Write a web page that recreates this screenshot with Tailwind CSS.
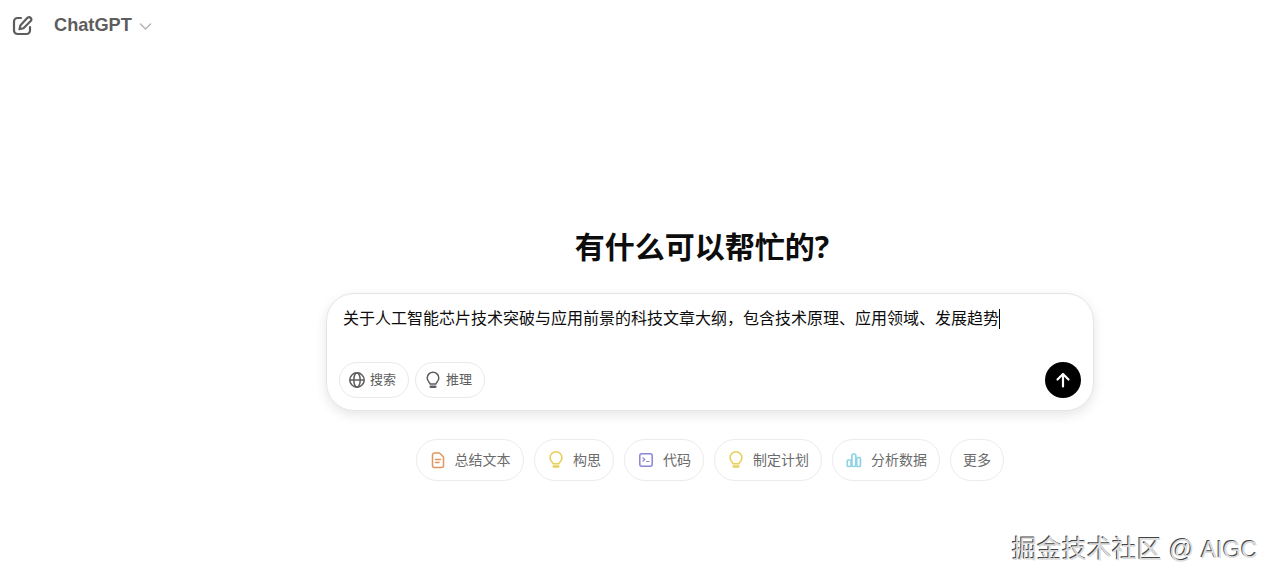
<!DOCTYPE html>
<html lang="zh">
<head>
  <meta charset="UTF-8" />
  <title>ChatGPT</title>
  <script src="https://cdn.jsdelivr.net/npm/@tailwindcss/browser@4"></script>
</head>
<body class="bg-white h-[580px] w-[1273px] overflow-hidden relative font-['Liberation_Sans','Noto_Sans_CJK_SC',sans-serif]">
  <!-- top bar -->
  <header class="flex items-center h-[50px] pl-[12px]">
    <svg class="w-[21px] h-[21px] text-[#5d5d5d]" viewBox="0 0 21 21" fill="none" stroke="currentColor" stroke-width="2.200" stroke-linecap="round" stroke-linejoin="round">
      <path d="M9 3H5.500A3.500 3.500 0 0 0 2 6.500v9A3.500 3.500 0 0 0 5.500 19h9a3.500 3.500 0 0 0 3.500-3.500V12"/>
      <path d="M15.700 2.600a2.300 2.300 0 0 1 3.200 3.200l-7.400 7.400-4 1 1-4z"/>
    </svg>
    <span class="ml-[21px] mt-[1px] text-[18.200px] font-bold text-[#5d5d5d]">ChatGPT</span>
    <svg class="ml-[7px] mt-[2px] w-[13px] h-[13px] text-[#b4b4b4]" viewBox="0 0 13 13" fill="none" stroke="currentColor" stroke-width="1.500" stroke-linecap="round" stroke-linejoin="round"><path d="M1.500 4l5 5 5-5"/></svg>
  </header>

  <main class="flex flex-col items-center ml-[326px] w-[768px]">
    <h1 class="mt-[177px] h-[40px] pr-[16px] leading-[40px] text-[30px] font-bold text-[#0d0d0d]">有什么可以帮忙的<span class="font-['Noto_Sans',sans-serif]">?</span></h1>

    <!-- composer -->
    <div class="mt-[26px] w-full h-[118px] rounded-[28px] border border-[#e5e5e5] bg-white shadow-[0_4px_12px_rgba(0,0,0,0.1)] flex flex-col justify-between pl-[12px] pr-[12px] pb-[12px]">
      <div class="flex items-center pl-[4px] pt-[13px] text-[16px] leading-[24px] text-[#0d0d0d] whitespace-nowrap">关于人工智能芯片技术突破与应用前景的科技文章大纲&#xFF0C;包含技术原理、应用领域、发展趋势<span class="inline-block w-px h-[20px] bg-black"></span></div>
      <div class="flex items-center justify-between">
        <div class="flex gap-[6px]">
          <button class="h-[36px] w-[70px] pr-[4px] rounded-full border border-[#e8e8e8] flex items-center justify-center gap-[4px] text-[13px] text-[#5d5d5d]">
            <svg class="w-[18px] h-[18px]" viewBox="0 0 18 18" fill="none" stroke="currentColor" stroke-width="1.500"><circle cx="9" cy="9" r="7.200"/><ellipse cx="9" cy="9" rx="3.200" ry="7.200"/><path d="M1.800 9h14.400"/></svg>
            搜索
          </button>
          <button class="h-[36px] w-[70px] pr-[4px] rounded-full border border-[#e8e8e8] flex items-center justify-center gap-[4px] text-[13px] text-[#5d5d5d]">
            <svg class="w-[18px] h-[18px]" viewBox="0 0 18 18" fill="none" stroke="currentColor" stroke-width="1.500" stroke-linecap="round"><path d="M6.200 13c0-1.300-3-2.600-3-6a5.800 5.800 0 0 1 11.600 0c0 3.400-3 4.700-3 6z"/><path d="M6.800 15.800h4.400" stroke-width="2.600"/></svg>
            推理
          </button>
        </div>
        <button class="w-[36px] h-[36px] rounded-full bg-black flex items-center justify-center">
          <svg class="w-[16px] h-[16px]" viewBox="0 0 16 16" fill="none" stroke="white" stroke-width="2.200" stroke-linecap="round" stroke-linejoin="round"><path d="M8 14.500V2M2.500 7.500L8 2l5.500 5.500"/></svg>
        </button>
      </div>
    </div>

    <!-- suggestions -->
    <div class="mt-[28px] flex gap-[10px] text-[14px] text-[#6b6b6b]">
      <button class="h-[42px] w-[108px] rounded-full border border-[#ececec] flex items-center justify-center gap-[9px]">
        <svg class="w-[16px] h-[18px] text-[#e2955f]" viewBox="0 0 16 18" fill="none" stroke="currentColor" stroke-width="1.500" stroke-linejoin="round" stroke-linecap="round"><path d="M2.500 4a2 2 0 0 1 2-2h5l4 4v8.500a2 2 0 0 1-2 2h-7a2 2 0 0 1-2-2z"/><path d="M5.500 8.500h5M5.500 11.500h3.500"/></svg>
        总结文本
      </button>
      <button class="h-[42px] w-[80px] rounded-full border border-[#ececec] flex items-center justify-center gap-[9px] pl-[1px]">
        <svg class="w-[16px] h-[18px] text-[#e9cf5a]" viewBox="0 0 16 18" fill="none" stroke="currentColor" stroke-width="1.600" stroke-linecap="round"><path d="M5.200 12.800c0-1.300-3.200-2.600-3.200-6a6 6 0 0 1 12 0c0 3.400-3.200 4.700-3.200 6z"/><path d="M5.800 15.500h4.400" stroke-width="2.600"/></svg>
        构思
      </button>
      <button class="h-[42px] w-[80px] rounded-full border border-[#ececec] flex items-center justify-center gap-[9px] pl-[1px]">
        <svg class="w-[16px] h-[16px] text-[#8a85d8]" viewBox="0 0 16 16" fill="none" stroke="currentColor" stroke-width="1.500" stroke-linecap="round" stroke-linejoin="round"><rect x="1.800" y="1.800" width="12.400" height="12.400" rx="2"/><path d="M5 6l1.800 1.500L5 9M8.500 9.500h2.500" stroke-width="1.200"/></svg>
        代码
      </button>
      <button class="h-[42px] w-[108px] rounded-full border border-[#ececec] flex items-center justify-center gap-[9px] pl-[1px]">
        <svg class="w-[16px] h-[18px] text-[#e9cf5a]" viewBox="0 0 16 18" fill="none" stroke="currentColor" stroke-width="1.600" stroke-linecap="round"><path d="M5.200 12.800c0-1.300-3.200-2.600-3.200-6a6 6 0 0 1 12 0c0 3.400-3.200 4.700-3.200 6z"/><path d="M5.800 15.500h4.400" stroke-width="2.600"/></svg>
        制定计划
      </button>
      <button class="h-[42px] w-[108px] rounded-full border border-[#ececec] flex items-center justify-center gap-[9px] pl-[1px]">
        <svg class="w-[16px] h-[16px] text-[#8fd3e3]" viewBox="0 0 16 16" fill="none" stroke="currentColor" stroke-width="1.700" stroke-linejoin="round"><rect x="1.300" y="8" width="3.700" height="6.500" rx="1"/><rect x="5.900" y="2" width="3.900" height="12.500" rx="1.500"/><rect x="10.700" y="5.500" width="3.700" height="9" rx="1"/></svg>
        分析数据
      </button>
      <button class="h-[42px] w-[54px] rounded-full border border-[#ececec] flex items-center justify-center">更多</button>
    </div>
  </main>

  <!-- watermark -->
  <div class="absolute left-[1012px] top-[533px] text-[25px] leading-[32px] text-[#dcdcdc] whitespace-nowrap [text-shadow:-1px_-1px_0_#444]">掘金技术社区 @ <span class="text-[23px]">AIGC</span></div>
</body>
</html>
